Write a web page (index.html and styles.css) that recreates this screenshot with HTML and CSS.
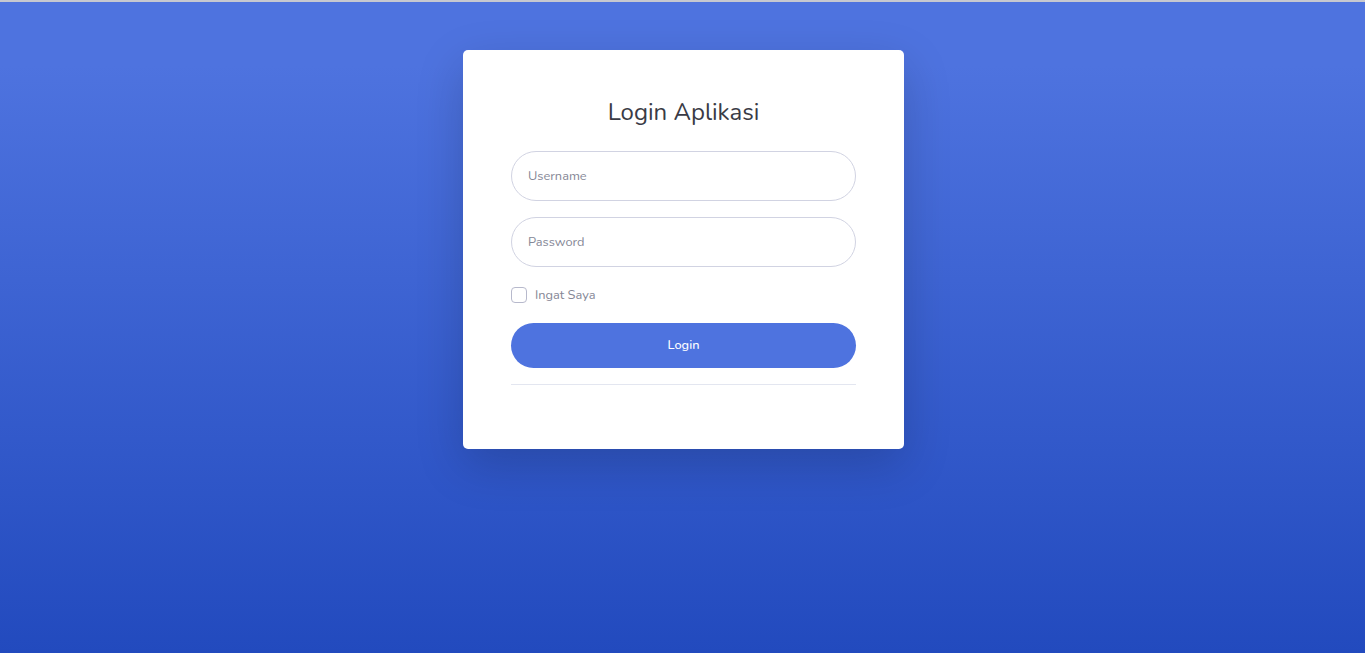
FILE: index.html
```html
<!DOCTYPE html>
<html lang="id">
<head>
<meta charset="utf-8">
<title>Login Aplikasi</title>
<link rel="stylesheet" href="styles.css">
</head>
<body>
<div class="topline"></div>
<main class="wrap">
  <div class="card">
    <h1 class="title">Login Aplikasi</h1>
    <form class="form">
      <input class="field" type="text" placeholder="Username">
      <input class="field" type="password" placeholder="Password">
      <label class="check">
        <span class="box"></span>
        <span class="check-label">Ingat Saya</span>
      </label>
      <button class="btn" type="button">Login</button>
    </form>
    <hr class="divider">
  </div>
</main>
</body>
</html>
```
FILE: styles.css
```css
html, body {
  margin: 0;
  height: 100%;
}
body {
  font-family: "Nunito", "Noto Sans", "Open Sans", sans-serif;
  background: linear-gradient(180deg, #4e73df 10%, #224abe 100%);
  min-height: 653px;
}
.topline {
  height: 2px;
  background: #c6c8d0;
}
.wrap {
  display: flex;
  justify-content: center;
  padding-top: 48px;
  padding-left: 2px;
}
.card {
  width: 441px;
  box-sizing: border-box;
  background: #fff;
  border-radius: 5px;
  padding: 48px 48px 48px;
  box-shadow: 0 16px 48px rgba(0, 0, 0, 0.175);
}
.title {
  margin: 0 0 24px;
  text-align: center;
  font-size: 24px;
  font-weight: 400;
  line-height: 28.8px;
  color: #3a3b45;
}
.form {
  display: flex;
  flex-direction: column;
}
.field {
  height: 50px;
  box-sizing: border-box;
  border: 1px solid #d1d3e2;
  border-radius: 25px;
  padding: 0 16px;
  font-family: inherit;
  font-size: 12.8px;
  color: #6e707e;
  margin-bottom: 16px;
  outline: none;
}
.field::placeholder {
  color: #858796;
}
.check {
  display: flex;
  align-items: center;
  gap: 8px;
  height: 24px;
  margin-bottom: 16px;
}
.box {
  width: 16px;
  height: 16px;
  box-sizing: border-box;
  border: 1px solid #b7b9cc;
  border-radius: 4px;
  background: #fff;
}
.check-label {
  font-size: 12.8px;
  color: #858796;
}
.btn {
  height: 45px;
  border: none;
  border-radius: 23px;
  background: #4e73df;
  color: #fff;
  font-family: inherit;
  font-size: 12.8px;
  font-weight: 500;
}
.divider {
  margin: 16px 0;
  border: 0;
  border-top: 1px solid #e3e6f0;
}
```
